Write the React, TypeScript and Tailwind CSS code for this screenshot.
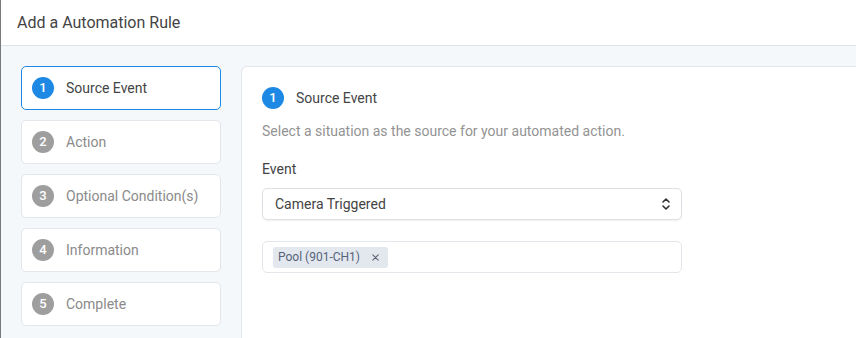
import React from "react";

const STEPS = ["Source Event", "Action", "Optional Condition(s)", "Information", "Complete"];

function StepBadge({ n, active }: { n: number; active: boolean }) {
  return (
    <div
      className={`w-[22px] h-[22px] rounded-full flex items-center justify-center text-[13px] font-medium text-white shrink-0 ${
        active ? "bg-[#1e88e5]" : "bg-[#9e9e9e]"
      }`}
    >
      {n}
    </div>
  );
}

export default function App() {
  return (
    <div
      className="w-[856px] h-[338px] overflow-hidden bg-[#f5f8fb] border-l border-[#7a7a7a] flex flex-col"
      style={{ fontFamily: "Roboto, 'Liberation Sans', sans-serif" }}
    >
      {/* header */}
      <div className="h-[46px] shrink-0 bg-white border-b border-[#dfe2e6] flex items-center pl-4">
        <h1 className="text-[16px] text-[#444]">Add a Automation Rule</h1>
      </div>

      <div className="flex flex-1 pt-5 pl-5 gap-5 min-h-0">
        {/* steps */}
        <div className="w-[200px] shrink-0 flex flex-col gap-[10px]">
          {STEPS.map((label, i) => {
            const active = i === 0;
            return (
              <div
                key={label}
                className={`h-[44px] rounded-[5px] bg-white border flex items-center gap-3 px-[10px] ${
                  active ? "border-[#1e88e5]" : "border-[#e3e6ea]"
                }`}
              >
                <StepBadge n={i + 1} active={active} />
                <span className={`text-[14px] ${active ? "text-[#444]" : "text-[#8a8a8a]"}`}>{label}</span>
              </div>
            );
          })}
        </div>

        {/* main panel */}
        <div className="flex-1 bg-white border-l border-t border-[#e3e6ea] rounded-tl-[6px] pt-5 pl-5">
          <div className="flex items-center gap-3 h-[22px]">
            <StepBadge n={1} active />
            <span className="text-[14px] text-[#444]">Source Event</span>
          </div>
          <p className="mt-3 text-[14px] leading-5 text-[#939393]">
            Select a situation as the source for your automated action.
          </p>
          <div className="mt-[18px] text-[14px] leading-5 text-[#444]">Event</div>

          <div className="mt-[9px] w-[420px] h-8 rounded-[5px] border border-[#dcdfe3] shadow-[0_1px_2px_rgba(0,0,0,0.06)] flex items-center justify-between pl-3 pr-[10px]">
            <span className="text-[14px] text-[#444]">Camera Triggered</span>
            <svg width="10" height="14" viewBox="0 0 10 14" fill="none" stroke="#333" strokeWidth="1.6" strokeLinecap="round" strokeLinejoin="round">
              <path d="M2 5 L5 2 L8 5" />
              <path d="M2 9 L5 12 L8 9" />
            </svg>
          </div>

          <div className="mt-[21px] w-[420px] h-8 rounded-[5px] border border-[#e3e6ea] flex items-center pl-[10px]">
            <span className="h-[21px] rounded-[3px] bg-[#e3e8ef] flex items-center gap-3 pl-[5px] pr-[9px] text-[12px] text-[#56627a]">
              Pool (901-CH1)
              <svg width="7" height="7" viewBox="0 0 7 7" stroke="#5a6473" strokeWidth="1.1" strokeLinecap="round">
                <path d="M0.8 0.8 L6.2 6.2 M6.2 0.8 L0.8 6.2" />
              </svg>
            </span>
          </div>
        </div>
      </div>
    </div>
  );
}
